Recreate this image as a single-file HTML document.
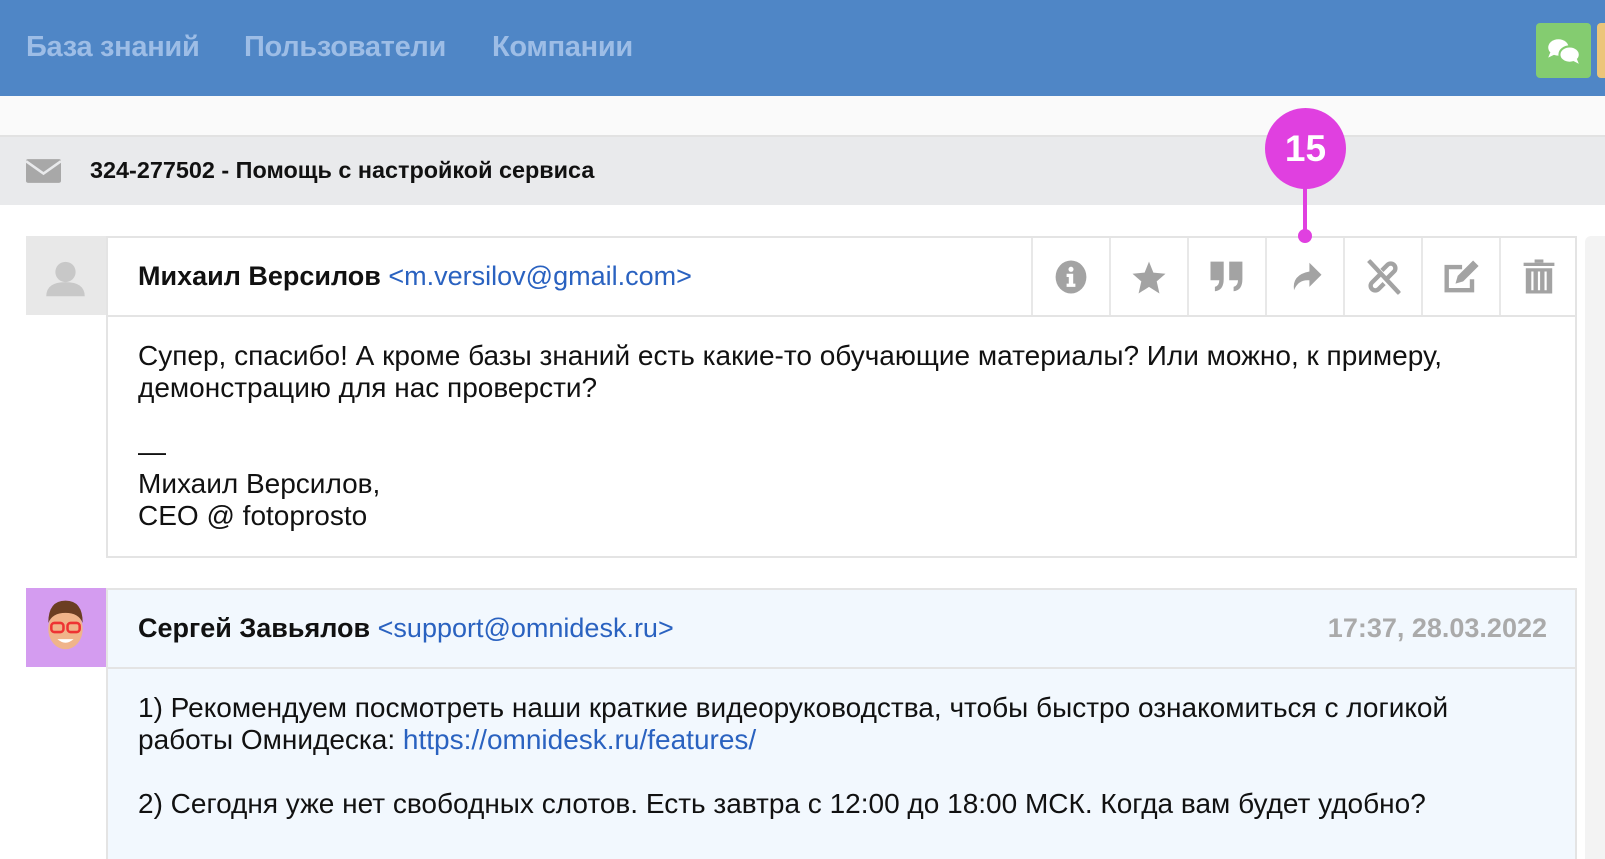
<!DOCTYPE html><html><head><meta charset="utf-8"><style>
*{margin:0;padding:0;box-sizing:border-box}
html{width:1605px;height:859px;overflow:hidden}
body{width:1605px;height:859px;overflow:hidden;background:#fff;font-family:"Liberation Sans",sans-serif;position:relative}
.hdr{position:absolute;left:0;top:0;width:1605px;height:96px;background:#4f86c6}
.nav{position:absolute;top:31px;font-size:29px;font-weight:bold;color:#9dbde6;letter-spacing:-0.3px}
.sub{position:absolute;top:96px;left:0;width:1605px;height:41px;background:#fafafa;border-bottom:2px solid #e2e2e2}
.bar{position:absolute;top:137px;left:0;width:1605px;height:68px;background:#e9eaec}
.card{position:absolute;left:106px;width:1471px;border:2px solid #e4e4e4}
.av{position:absolute;left:26px;width:80px;height:79px}
.name{position:absolute;left:30px;top:23px;font-size:27px;color:#111}
.name b{font-weight:bold}
.name span{color:#2a62c0}
.body{position:absolute;left:30px;font-size:28px;line-height:32px;color:#111}
.cell{position:absolute;top:0;width:78px;height:77px;border-left:2px solid #e8e8e8;display:flex;align-items:center;justify-content:center}
.cell svg{transform:scale(1.1)}
a{color:#2a62c0;text-decoration:none}
</style></head><body>
<div class="hdr">
<div class="nav" style="left:26px">База знаний</div>
<div class="nav" style="left:244px">Пользователи</div>
<div class="nav" style="left:492px">Компании</div>
<div style="position:absolute;left:1536px;top:23px;width:55px;height:55px;border-radius:4px;background:#84cc70">
<svg width="55" height="55" viewBox="0 0 54 54"><ellipse cx="22" cy="24" rx="10" ry="8" fill="#fff"/><path d="M14 29l-2 5 6-3z" fill="#fff"/><ellipse cx="33" cy="31" rx="10" ry="8" fill="#fff" stroke="#84cc70" stroke-width="2"/><path d="M40 35l2 5-6-3z" fill="#fff"/></svg></div>
<div style="position:absolute;left:1597px;top:23px;width:8px;height:55px;border-radius:4px 0 0 4px;background:#ecc57a"></div>
</div>
<div class="sub"></div>
<div class="bar">
<svg style="position:absolute;left:26px;top:22px" width="35" height="24" viewBox="0 0 34 23"><rect width="34" height="23" rx="2" fill="#a8a8a8"/><path d="M0 2l17 12 17-12" stroke="#e9eaec" stroke-width="2.5" fill="none"/></svg>
<div style="position:absolute;left:90px;top:20px;font-size:23.4px;font-weight:bold;color:#111">324-277502 - Помощь с настройкой сервиса</div>
</div>
<div style="position:absolute;left:1585px;top:236px;width:20px;height:623px;background:#f3f3f3;border-radius:6px 0 0 0"></div>

<div class="av" style="top:236px;background:#e8e8e8">
<svg width="80" height="79" viewBox="0 0 79 77"><circle cx="39" cy="35" r="10" fill="#c8c8c8"/><path d="M20 59q0-14 19-14t19 14z" fill="#c8c8c8"/></svg></div>
<div class="card" style="top:236px;height:322px;background:#fff">
<div style="position:absolute;left:0;top:0;width:1467px;height:79px;border-bottom:2px solid #e4e4e4"></div>
<div class="name"><b>Михаил Версилов</b> <span>&lt;m.versilov@gmail.com&gt;</span></div>
<div class="cell" style="left:923px"><svg width="32" height="32" viewBox="0 0 32 32"><ellipse cx="16" cy="16" rx="14" ry="15" fill="#a3a3a3"/><circle cx="16" cy="9" r="2.3" fill="#fff"/><path d="M12 13h6v9h2v3h-8v-3h2v-6h-2z" fill="#fff"/></svg></div>
<div class="cell" style="left:1001px"><svg width="32" height="32" viewBox="0 0 32 32"><path d="M16 2l4 10 11 1-8 7 2.5 11L16 25l-9.5 6L9 20l-8-7 11-1z" fill="#a3a3a3"/></svg></div>
<div class="cell" style="left:1079px"><svg width="32" height="32" viewBox="0 0 32 32"><path d="M1 2h12v16q0 10-8 11v-4q4-1 4-6H1zM18 2h12v16q0 10-8 11v-4q4-1 4-6h-8z" fill="#a3a3a3"/></svg></div>
<div class="cell" style="left:1157px"><svg width="32" height="32" viewBox="0 0 32 32"><path d="M20 3l11 11-11 11v-6q-10-1-14 9-2-14 14-17z" fill="#a3a3a3"/></svg></div>
<div class="cell" style="left:1235px"><svg width="32" height="32" viewBox="0 0 32 32" fill="none" stroke="#a3a3a3" stroke-width="4"><path d="M3 1l28 30"/><path d="M13 14l-7 7a4 4 0 006 6l5-5M19 18l7-7a4 4 0 00-6-6l-5 5"/></svg></div>
<div class="cell" style="left:1313px"><svg width="34" height="32" viewBox="0 0 34 32"><path d="M27 18v10H4V7h14" fill="none" stroke="#a3a3a3" stroke-width="4"/><path d="M12 22l2-7 14-14 5 5-14 14z" fill="#a3a3a3"/></svg></div>
<div class="cell" style="left:1391px"><svg width="30" height="32" viewBox="0 0 30 32"><rect x="1" y="3" width="28" height="3" fill="#a3a3a3"/><rect x="11" y="0" width="8" height="3" fill="#a3a3a3"/><path d="M3 8h24v23H3z" fill="#a3a3a3"/><path d="M9 11v17M15 11v17M21 11v17" stroke="#fff" stroke-width="2"/></svg></div>
<div class="body" style="top:102px">Супер, спасибо! А кроме базы знаний есть какие-то обучающие материалы? Или можно, к примеру,<br>демонстрацию для нас проверсти?<br><br>—<br>Михаил Версилов,<br>CEO @ fotoprosto</div>
</div>

<div class="av" style="top:588px;background:#d49cf0">
<svg width="80" height="79" viewBox="0 0 79 77"><ellipse cx="39" cy="40" rx="17" ry="20" fill="#f0b48a"/><path d="M22 34q0-22 17-22t17 22q-4-10-17-10t-17 10z" fill="#6b3e22"/><rect x="25" y="34" width="12" height="9" rx="3" fill="none" stroke="#e33" stroke-width="2.5"/><rect x="41" y="34" width="12" height="9" rx="3" fill="none" stroke="#e33" stroke-width="2.5"/><path d="M31 50q8 7 16 0z" fill="#fff"/></svg></div>
<div class="card" style="top:588px;height:280px;background:#f2f8fe">
<div style="position:absolute;left:0;top:0;width:1467px;height:79px;border-bottom:2px solid #e4e4e4"></div>
<div class="name"><b>Сергей Завьялов</b> <span>&lt;support@omnidesk.ru&gt;</span></div>
<div style="position:absolute;right:28px;top:23px;font-size:27px;font-weight:bold;color:#aaa">17:37, 28.03.2022</div>
<div class="body" style="top:102px">1) Рекомендуем посмотреть наши краткие видеоруководства, чтобы быстро ознакомиться с логикой<br>работы Омнидеска: <a>https://omnidesk.ru/features/</a><br><br>2) Сегодня уже нет свободных слотов. Есть завтра с 12:00 до 18:00 МСК. Когда вам будет удобно?</div>
</div>

<div style="position:absolute;left:1303px;top:175px;width:4px;height:60px;background:#e040e0"></div>
<div style="position:absolute;left:1298px;top:229px;width:14px;height:14px;border-radius:50%;background:#e040e0"></div>
<div style="position:absolute;left:1265px;top:108px;width:81px;height:81px;border-radius:50%;background:#e040e0;color:#fff;font-size:37px;font-weight:bold;text-align:center;line-height:81px">15</div>
</body></html>
